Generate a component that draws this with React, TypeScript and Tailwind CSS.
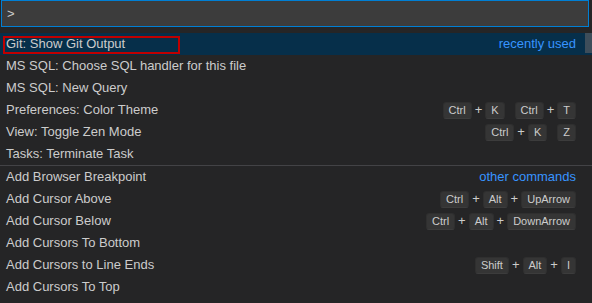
import React from "react"

type Row = {
    label: string
    keys?: string[][]
    tag?: string
}

const top: Row[] = [
    { label: "Git: Show Git Output", tag: "recently used" },
    { label: "MS SQL: Choose SQL handler for this file" },
    { label: "MS SQL: New Query" },
    { label: "Preferences: Color Theme", keys: [["Ctrl", "K"], ["Ctrl", "T"]] },
    { label: "View: Toggle Zen Mode", keys: [["Ctrl", "K"], ["Z"]] },
    { label: "Tasks: Terminate Task" },
]

const others: Row[] = [
    { label: "Add Browser Breakpoint", tag: "other commands" },
    { label: "Add Cursor Above", keys: [["Ctrl", "Alt", "UpArrow"]] },
    { label: "Add Cursor Below", keys: [["Ctrl", "Alt", "DownArrow"]] },
    { label: "Add Cursors To Bottom" },
    { label: "Add Cursors to Line Ends", keys: [["Shift", "Alt", "I"]] },
    { label: "Add Cursors To Top" },
]

const Key = ({ k }: { k: string }) => (
    <span className="h-[17px] px-[5px] flex items-center rounded-[3px] bg-[#353535] border border-[#2f2f2f] border-b-[#3c3c3c] text-[11px] text-[#cccccc]">
        {k}
    </span>
)

const Keys = ({ keys }: { keys: string[][] }) => (
    <div className="flex items-center gap-[10px]">
        {keys.map((chord, i) => (
            <div key={i} className="flex items-center">
                {chord.map((k, j) => (
                    <React.Fragment key={j}>
                        {j > 0 && <span className="px-[3px] text-[13px] text-[#cccccc]">+</span>}
                        <Key k={k} />
                    </React.Fragment>
                ))}
            </div>
        ))}
    </div>
)

const Item = ({ row, active, first }: { row: Row; active?: boolean; first?: boolean }) => (
    <div className={`relative flex items-center justify-between h-[22px] pl-[6px] pr-4 text-[13px] text-[#cccccc] ${active ? "bg-[#062f4a]" : ""} ${first ? "box-content border-t border-[#434346]" : ""}`}>
        <span>{row.label}</span>
        {row.tag && <span className="text-[#3794ff]">{row.tag}</span>}
        {row.keys && <Keys keys={row.keys} />}
        {active && (
            <>
                <div className="absolute left-[3px] top-[3px] w-[177px] h-[18px] border-2 border-[#c00000]" />
                <div className="absolute right-0 top-0 w-[7px] h-[20px] bg-[#3d4d5a]" />
            </>
        )}
    </div>
)

export default function App() {
    return (
        <div className="w-[592px] h-[303px] bg-[#252526] overflow-hidden" style={{ fontFamily: '"Liberation Sans", Arial, sans-serif' }}>
            <div className="ml-[1px] w-[588px] h-[27px] bg-[#3c3c3c] border border-[#007fd4] flex items-center pl-[5px] text-[13px] text-[#cccccc]">
                &gt;
            </div>
            <div className="mt-[6px]">
                {top.map((r, i) => (
                    <Item key={r.label} row={r} active={i === 0} />
                ))}
                {others.map((r, i) => (
                    <Item key={r.label} row={r} first={i === 0} />
                ))}
            </div>
        </div>
    )
}
